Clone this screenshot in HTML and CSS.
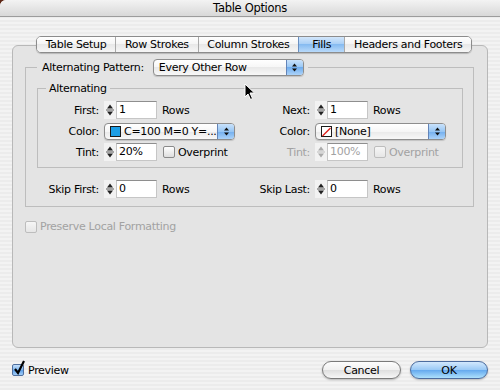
FILE: index.html
```html
<!DOCTYPE html>
<html lang="en">
<head>
    <meta charset="UTF-8">
    <title>Table Options</title>
    <link rel="stylesheet" href="styles.css">
</head>
<body>
    <div class="window">
        <div class="titlebar">Table Options</div>

        <div class="tabs">
            <span class="tab">Table Setup</span>
            <span class="tab">Row Strokes</span>
            <span class="tab">Column Strokes</span>
            <span class="tab active">Fills</span>
            <span class="tab">Headers and Footers</span>
        </div>

        <div class="panel">
            <fieldset class="frame pattern">
                <legend>
                    <span>Alternating Pattern:</span>
                    <span class="popup wide">
                        <span class="value">Every Other Row</span>
                        <span class="arrows"><svg width="7" height="11" viewBox="0 0 7 11"><path d="M1 4.5h5L3.5 1.5z M1 6.5h5L3.5 9.5z" fill="#111"/></svg></span>
                    </span>
                </legend>

                <fieldset class="frame alternating">
                    <legend>Alternating</legend>
                    <div class="grid">
                        <span class="lbl">First:</span>
                        <div class="ctrl">
                            <span class="spin"><svg width="12" height="18" viewBox="0 0 12 18"><path d="M3 7.5h6L6 3.5z M3 10.5h6L6 14.5z" fill="#222"/><path d="M2 9h8" stroke="#555"/></svg></span>
                            <span class="field">1</span>
                            <span class="unit">Rows</span>
                        </div>
                        <span class="lbl">Next:</span>
                        <div class="ctrl">
                            <span class="spin"><svg width="12" height="18" viewBox="0 0 12 18"><path d="M3 7.5h6L6 3.5z M3 10.5h6L6 14.5z" fill="#222"/><path d="M2 9h8" stroke="#555"/></svg></span>
                            <span class="field">1</span>
                            <span class="unit">Rows</span>
                        </div>

                        <span class="lbl">Color:</span>
                        <div class="ctrl">
                            <span class="popup">
                                <span class="value"><span class="swatch"></span>C=100 M=0 Y=...</span>
                                <span class="arrows"><svg width="7" height="11" viewBox="0 0 7 11"><path d="M1 4.5h5L3.5 1.5z M1 6.5h5L3.5 9.5z" fill="#111"/></svg></span>
                            </span>
                        </div>
                        <span class="lbl">Color:</span>
                        <div class="ctrl">
                            <span class="popup">
                                <span class="value"><span class="swatch none"><svg width="10" height="10" viewBox="0 0 10 10"><path d="M0.5 9.5L9.5 0.5" stroke="#e0201c" stroke-width="1.6"/></svg></span>[None]</span>
                                <span class="arrows"><svg width="7" height="11" viewBox="0 0 7 11"><path d="M1 4.5h5L3.5 1.5z M1 6.5h5L3.5 9.5z" fill="#111"/></svg></span>
                            </span>
                        </div>

                        <span class="lbl">Tint:</span>
                        <div class="ctrl">
                            <span class="spin"><svg width="12" height="18" viewBox="0 0 12 18"><path d="M3 7.5h6L6 3.5z M3 10.5h6L6 14.5z" fill="#222"/><path d="M2 9h8" stroke="#555"/></svg></span>
                            <span class="field">20%</span>
                            <span class="box"></span>
                            <span>Overprint</span>
                        </div>
                        <span class="lbl off">Tint:</span>
                        <div class="ctrl off">
                            <span class="spin"><svg width="12" height="18" viewBox="0 0 12 18"><path d="M3 7.5h6L6 3.5z M3 10.5h6L6 14.5z" fill="#aaa"/><path d="M2 9h8" stroke="#bbb"/></svg></span>
                            <span class="field">100%</span>
                            <span class="box"></span>
                            <span>Overprint</span>
                        </div>
                    </div>
                </fieldset>

                <div class="grid skip">
                    <span class="lbl">Skip First:</span>
                    <div class="ctrl">
                        <span class="spin"><svg width="12" height="18" viewBox="0 0 12 18"><path d="M3 7.5h6L6 3.5z M3 10.5h6L6 14.5z" fill="#222"/><path d="M2 9h8" stroke="#555"/></svg></span>
                        <span class="field">0</span>
                        <span class="unit">Rows</span>
                    </div>
                    <span class="lbl">Skip Last:</span>
                    <div class="ctrl">
                        <span class="spin"><svg width="12" height="18" viewBox="0 0 12 18"><path d="M3 7.5h6L6 3.5z M3 10.5h6L6 14.5z" fill="#222"/><path d="M2 9h8" stroke="#555"/></svg></span>
                        <span class="field">0</span>
                        <span class="unit">Rows</span>
                    </div>
                </div>
            </fieldset>

            <div class="check-row off">
                <span class="box"></span>
                <span>Preserve Local Formatting</span>
            </div>
        </div>

        <div class="footer">
            <div class="check-row">
                <span class="box checked"><svg width="14" height="16" viewBox="0 0 14 16"><path d="M3 9l3 4L12 1" fill="none" stroke="#000" stroke-width="2.2"/></svg></span>
                <span>Preview</span>
            </div>
            <div class="buttons">
                <button class="btn">Cancel</button>
                <button class="btn default">OK</button>
            </div>
        </div>

        <svg class="cursor" width="12" height="18" viewBox="0 0 12 18"><path d="M1 1v13l3-3 2.5 5.5 2-1L6 10h4.5z" fill="#000" stroke="#fff" stroke-width="1"/></svg>
    </div>
</body>
</html>
```

FILE: styles.css
```css
body {
    margin: 0;
    background: #5e2716;
    font-family: "DejaVu Sans", Verdana, sans-serif;
    font-size: 11px;
    letter-spacing: -0.3px;
    color: #000;
}

.window {
    position: relative;
    width: 500px;
    height: 390px;
    overflow: hidden;
    border-top-left-radius: 6px;
    background: repeating-linear-gradient(to bottom, #ececec 0 2px, #f3f3f3 2px 4px);
}

.titlebar {
    height: 16px;
    line-height: 17px;
    text-align: center;
    font-size: 11.5px;
    border-bottom: 1px solid #9c9c9c;
    background: linear-gradient(#f3f3f3, #d8d8d8);
}

/* tab strip */
.tabs {
    position: relative;
    z-index: 1;
    display: flex;
    width: max-content;
    margin: 19px 0 0 36px;
    border: 1px solid #8c8c8c;
    border-radius: 5px;
    overflow: hidden;
    box-shadow: 0 1px 1px rgba(0,0,0,0.2);
}

.tab {
    padding: 0 8.75px;
    line-height: 15px;
    border-left: 1px solid #a9a9a9;
    background: linear-gradient(#ffffff, #f4f4f4 50%, #e8e8e8 50%, #f6f6f6);
}

.tab:first-child {
    border-left: 0;
}

.tab.active {
    padding: 0 13px;
    border-left-color: #6a8fc0;
    background: linear-gradient(#d3e7fb, #a6cdf5 50%, #86bbf1 50%, #b9dafa);
}

.panel {
    box-sizing: border-box;
    height: 303px;
    margin: -8px 12px 0;
    padding: 13px 13px 0 12px;
    border: 1px solid #b8b8b8;
    border-radius: 6px;
    background: #e4e4e4;
}

/* group boxes */
.frame {
    margin: 0;
    min-width: 0;
    border: 1px solid #bdbdbd;
}

.pattern {
    padding: 6px 10px 8px 11px;
}

.pattern > legend {
    display: flex;
    align-items: center;
    gap: 9px;
    padding: 0 4px 0 5px;
}

.alternating {
    padding: 6px 0 6px 0;
}

.alternating > legend {
    margin-left: 8px;
    padding: 0 3px;
    line-height: 13px;
}

.grid {
    display: grid;
    grid-template-columns: 61px 135px 66px 1fr;
    column-gap: 5px;
    row-gap: 3px;
    align-items: center;
}

.skip {
    margin-top: 12px;
    padding-left: 1px;
}

.lbl {
    text-align: right;
    white-space: nowrap;
}

.ctrl {
    display: flex;
    align-items: center;
    height: 18px;
    white-space: nowrap;
}

.off {
    color: #a2a2a2;
}

.spin {
    display: flex;
    width: 12px;
    height: 18px;
    background: #f2f2f2;
}

.field {
    box-sizing: border-box;
    width: 41px;
    height: 18px;
    padding-left: 2px;
    line-height: 16px;
    background: #fff;
    border: 1px solid #c6c6c6;
    border-top-color: #8e8e8e;
}

.unit {
    margin-left: 5px;
}

/* popup menus */
.popup {
    display: flex;
    align-items: stretch;
    box-sizing: border-box;
    width: 131px;
    height: 17px;
    border: 1px solid #8d8d8d;
    border-radius: 4px;
    overflow: hidden;
    background: linear-gradient(#ffffff, #f6f6f6 50%, #e9e9e9 50%, #f8f8f8);
    box-shadow: 0 1px 1px rgba(0,0,0,0.15);
}

.popup.wide {
    width: 151px;
}

.popup .value {
    flex: 1;
    display: flex;
    align-items: center;
    padding-left: 5px;
    line-height: 15px;
    overflow: hidden;
}

.popup .arrows {
    display: flex;
    align-items: center;
    justify-content: center;
    width: 16px;
    border-left: 1px solid #6384b8;
    background: linear-gradient(#c9e2fb, #97c6f4 50%, #70adee 50%, #acd3f9);
}

.swatch {
    display: flex;
    box-sizing: border-box;
    width: 11px;
    height: 11px;
    margin-right: 3px;
    border: 1px solid #1a1a1a;
    background: #1c9ee6;
}

.swatch.none {
    background: #fff;
}

/* checkboxes */
.box {
    box-sizing: border-box;
    width: 12px;
    height: 12px;
    margin: 0 3px 0 6px;
    border: 1px solid #8a8a8a;
    border-radius: 2px;
    background: linear-gradient(#ffffff, #dedede);
}

.off .box {
    border-color: #bdbdbd;
    background: linear-gradient(#f6f6f6, #e6e6e6);
}

.check-row {
    display: flex;
    align-items: center;
    height: 13px;
}

.check-row .box {
    margin-left: 0;
}

.panel > .check-row {
    margin-top: 13px;
}

.box.checked {
    position: relative;
    border-color: #4f6f9e;
    background: linear-gradient(#c5e0fb, #7db5ee 50%, #5b9ee8 50%, #a2cdf7);
    margin-right: 4px;
}

.box.checked svg {
    position: absolute;
    left: -1px;
    top: -5px;
}

/* bottom bar */
.footer {
    display: flex;
    align-items: center;
    justify-content: space-between;
    margin-top: 13px;
    padding: 0 12px;
}

.buttons {
    display: flex;
    gap: 9px;
}

.btn {
    width: 79px;
    height: 18px;
    padding: 0;
    font: inherit;
    letter-spacing: inherit;
    color: #000;
    border: 1px solid #7a7a7a;
    border-radius: 9px;
    background: linear-gradient(#fdfdfd, #f0f0f0 50%, #dedede 50%, #f7f7f7);
    box-shadow: 0 1px 2px rgba(0,0,0,0.25);
}

.btn.default {
    width: 78px;
    border-color: #4c6c9e;
    background: linear-gradient(#d2e8fd, #98c8f5 50%, #63a8ee 50%, #ade0fc);
}

.cursor {
    position: absolute;
    left: 244px;
    top: 83px;
}
```
